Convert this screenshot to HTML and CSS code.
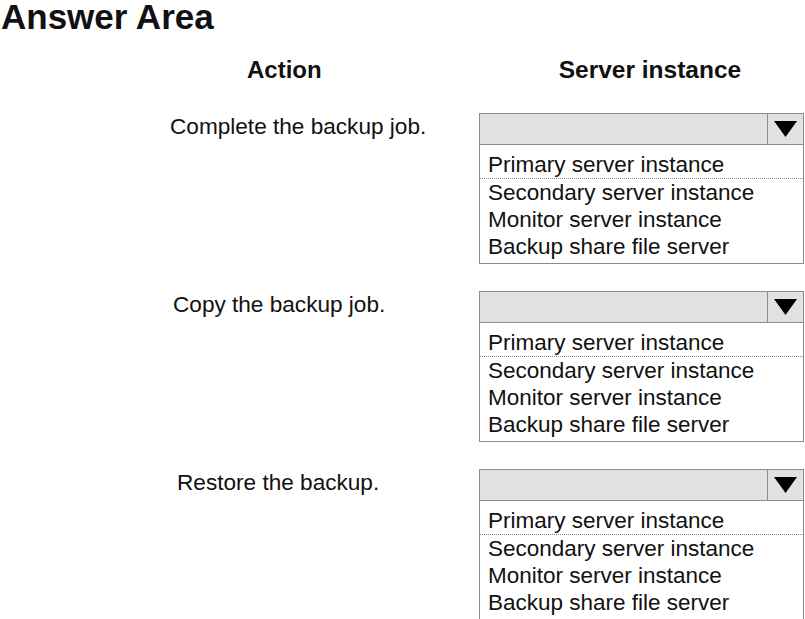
FILE: index.html
```html
<!DOCTYPE html>
<html lang="en">
<head>
    <meta charset="UTF-8">
    <meta name="viewport" content="width=device-width, initial-scale=1.0">
    <title>Answer Area</title>
    <link rel="stylesheet" href="styles.css">
</head>
<body>

<h1 class="title">Answer Area</h1>

<div class="headings">
    <div class="heading heading-action">Action</div>
    <div class="heading heading-server">Server instance</div>
</div>

<div class="rows">
    <div class="row">
        <div class="action action-1">Complete the backup job.</div>
        <div class="dropdown">
            <div class="dropdown-head">
                <div class="dropdown-value"></div>
                <div class="dropdown-arrow">
                    <svg width="23" height="16" viewBox="0 0 23 16"><polygon points="0,0 23,0 11.5,16" fill="#000"/></svg>
                </div>
            </div>
            <ul class="dropdown-list">
                <li class="option selected">Primary server instance</li>
                <li class="option">Secondary server instance</li>
                <li class="option">Monitor server instance</li>
                <li class="option">Backup share file server</li>
            </ul>
        </div>
    </div>

    <div class="row">
        <div class="action action-2">Copy the backup job.</div>
        <div class="dropdown">
            <div class="dropdown-head">
                <div class="dropdown-value"></div>
                <div class="dropdown-arrow">
                    <svg width="23" height="16" viewBox="0 0 23 16"><polygon points="0,0 23,0 11.5,16" fill="#000"/></svg>
                </div>
            </div>
            <ul class="dropdown-list">
                <li class="option selected">Primary server instance</li>
                <li class="option">Secondary server instance</li>
                <li class="option">Monitor server instance</li>
                <li class="option">Backup share file server</li>
            </ul>
        </div>
    </div>

    <div class="row">
        <div class="action action-3">Restore the backup.</div>
        <div class="dropdown">
            <div class="dropdown-head">
                <div class="dropdown-value"></div>
                <div class="dropdown-arrow">
                    <svg width="23" height="16" viewBox="0 0 23 16"><polygon points="0,0 23,0 11.5,16" fill="#000"/></svg>
                </div>
            </div>
            <ul class="dropdown-list">
                <li class="option selected">Primary server instance</li>
                <li class="option">Secondary server instance</li>
                <li class="option">Monitor server instance</li>
                <li class="option">Backup share file server</li>
            </ul>
        </div>
    </div>
</div>

</body>
</html>
```

FILE: styles.css
```css
body { margin: 0; background: #fff; color: #111; font-family: "Liberation Sans", Arial, sans-serif; }

.title { margin: 0; padding-left: 1px; font-size: 35px; line-height: 33px; font-weight: bold; }

.headings { display: flex; margin-top: 25px; height: 24px; }
.heading { font-size: 24px; line-height: 24px; font-weight: bold; }
.heading-action { margin-left: 247px; }
.heading-server { margin-left: 237px; font-size: 24.5px; }

.rows { display: flex; flex-direction: column; gap: 27px; margin-top: 31px; }
.row { display: grid; grid-template-columns: 479px 325px; }

.action { padding-top: 3px; font-size: 22.6px; line-height: 22px; }
.action-1 { padding-left: 170px; }
.action-2 { padding-left: 173px; }
.action-3 { padding-left: 177px; }

.dropdown { width: 325px; }
.dropdown-head { display: flex; height: 30px; background: #e1e1e1; border: 1px solid #8c8c8c; }
.dropdown-value { flex: 1; }
.dropdown-arrow { width: 35px; border-left: 1px solid #8c8c8c; display: flex; align-items: center; justify-content: center; }

.dropdown-list { list-style: none; margin: 0; padding: 0 0 3px 0; border: 1px solid #8c8c8c; border-top: none; background: #fff; }
.option { padding-left: 8px; font-size: 22.5px; line-height: 27px; }
.option.selected { margin-left: -1px; padding-left: 8px; padding-top: 6px; border-left: 1px dotted #8c8c8c; border-bottom: 1px dotted #8c8c8c; }
```
